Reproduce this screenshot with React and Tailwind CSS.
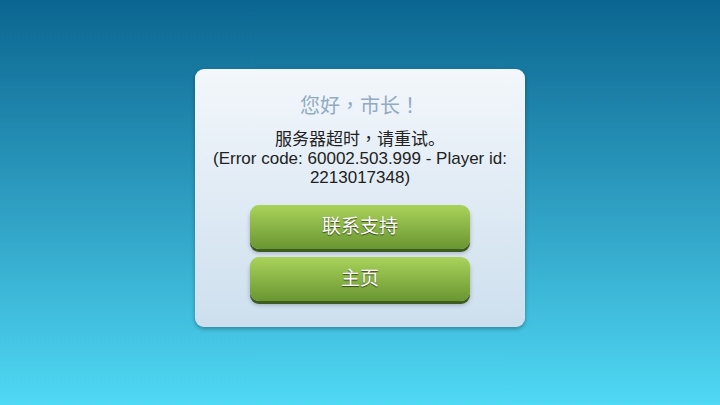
import React from 'react';

const font = { fontFamily: '"Liberation Sans", "Noto Sans CJK SC", sans-serif' };
const tcFont = { fontFamily: '"Liberation Sans", "Noto Sans CJK TC", sans-serif' };

const GreenButton = ({ label }) => (
  <button className="w-[220px] h-[44px] rounded-[9px] bg-gradient-to-b from-[#aad35a] to-[#6a9632] shadow-[0_3px_0_#3d5c20,0_4px_4px_rgba(0,0,0,0.25)] text-white text-[19px] [text-shadow:0_1px_1px_rgba(0,0,0,0.6)] flex items-center justify-center">
    {label}
  </button>
);

const App = () => {
  return (
    <div
      className="w-[720px] h-[405px] bg-gradient-to-b from-[#0a6690] to-[#50d9f4] flex justify-center pt-[69px]"
      style={font}
    >
      <div className="w-[330px] h-[258px] rounded-[9px] bg-gradient-to-b from-[#f3f7fb] to-[#cddfee] shadow-[0_2px_4px_rgba(0,0,0,0.3)] flex flex-col items-center pt-[25px]">
        <h1 className="text-[20px] leading-[24px] text-[#92abc2]" style={tcFont}>
          您好，市长！
        </h1>
        <p className="mt-[12px] text-[17px] leading-[19px] text-[#222] text-center">
          服务器超时<span style={tcFont}>，</span>请重试。
          <br />
          (Error code: 60002.503.999 - Player id:
          <br />
          2213017348)
        </p>
        <div className="mt-[18px] flex flex-col gap-[8px]">
          <GreenButton label="联系支持" />
          <GreenButton label="主页" />
        </div>
      </div>
    </div>
  );
};

export default App;
